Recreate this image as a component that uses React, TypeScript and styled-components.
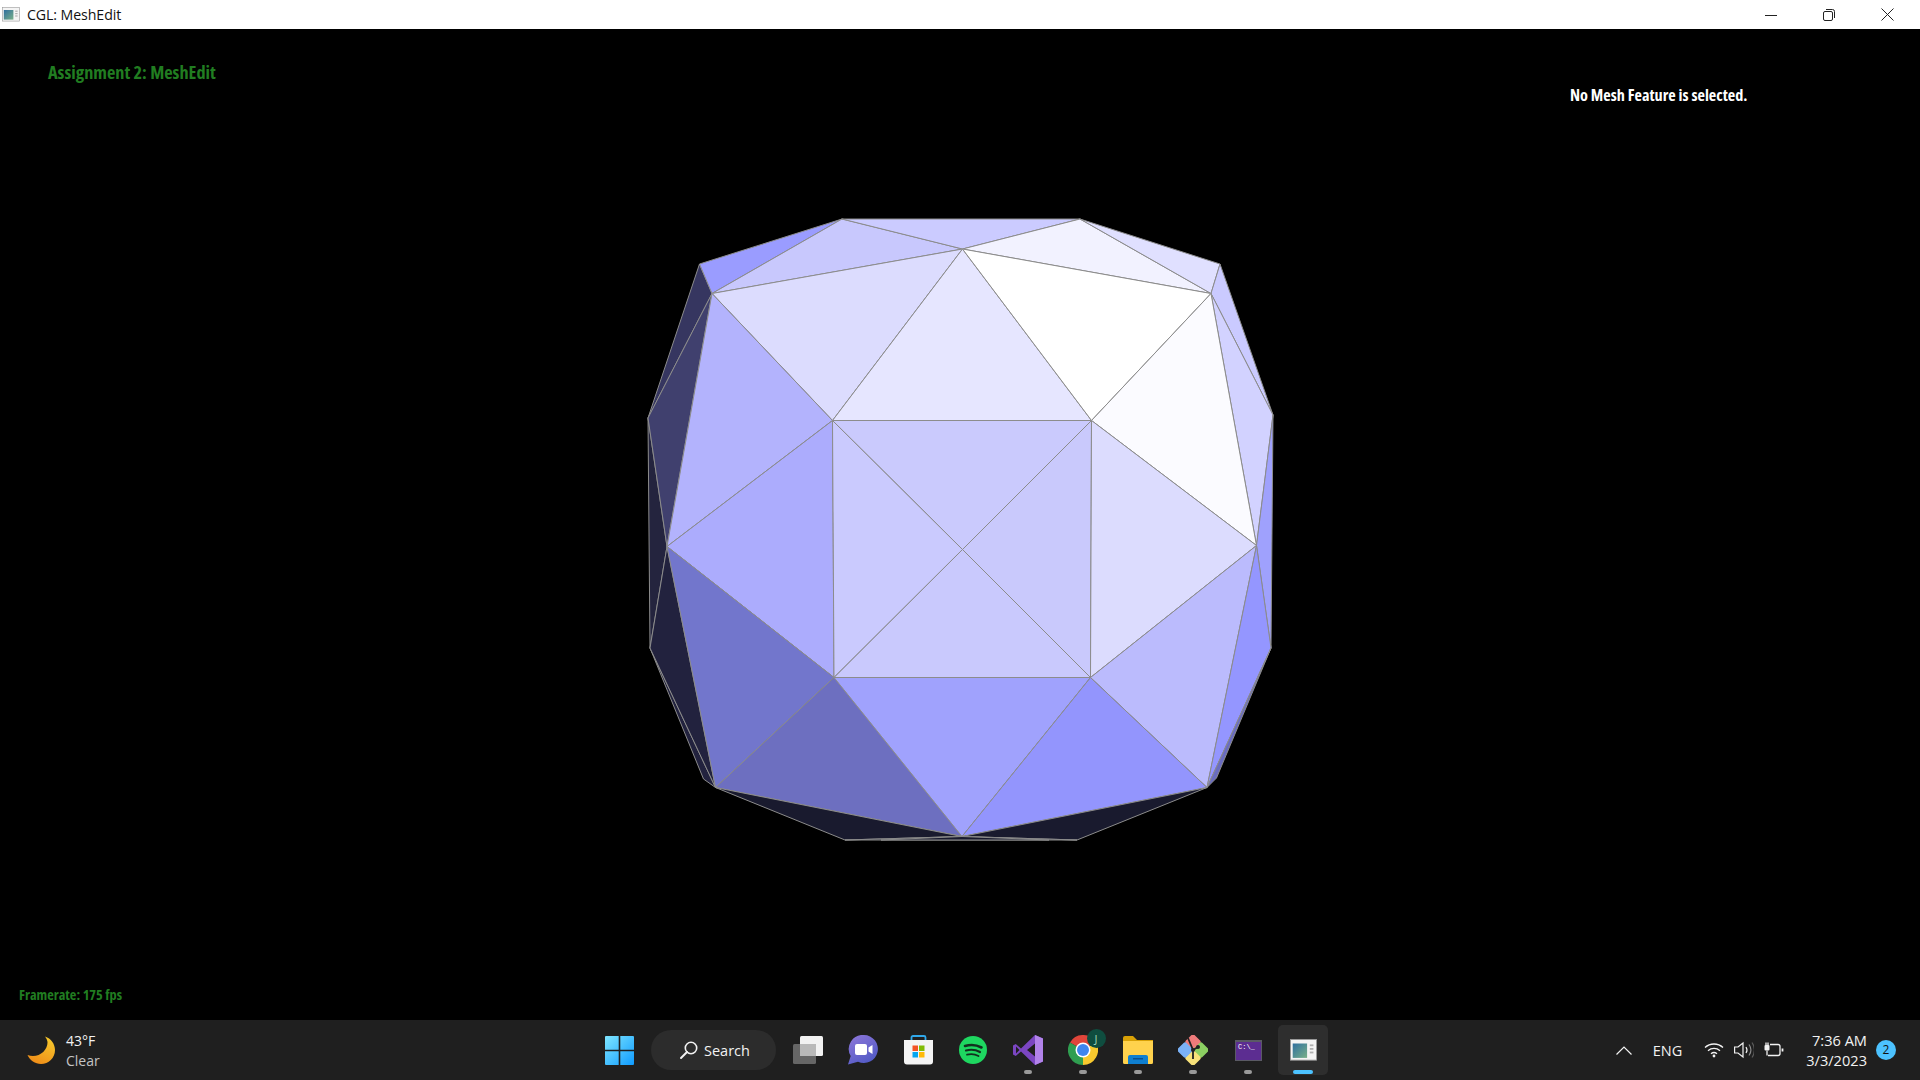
import React, { FC } from "react";
import styled, { createGlobalStyle } from "styled-components";

const Global = createGlobalStyle`
  html, body, #root {
    margin: 0;
    width: 100%;
    height: 100%;
    background: #000;
  }
`;

type P = [number, number];

const V: Record<string, P> = {
  t1: [842, 219],
  t2: [1080, 219],
  c: [962.5, 249],
  uli: [712, 293.5],
  ulo: [699.5, 264],
  uri: [1211, 293.5],
  uro: [1220, 264],
  lo: [648, 418],
  ro: [1273, 415],
  tl: [832.5, 420.5],
  tr: [1091.5, 420.5],
  l: [667, 546.5],
  r: [1256.5, 545.5],
  m: [962.5, 549.5],
  bl: [834, 677.5],
  br: [1090.5, 677.5],
  llo: [650, 648],
  rlo: [1271, 648],
  lli: [715.5, 787.5],
  lri: [1207, 787.5],
  lbo: [703.5, 779],
  rbo: [1216.5, 778],
  bc: [962, 836.5],
  bbl: [845, 840],
  bbr: [1077, 840],
  sl: [881, 840],
  sr: [1049, 840],
};

const FACES: [string, string][] = [
  ["lo l llo", "#24243e"],
  ["llo lbo lli", "#22223e"],
  ["l llo lli", "#22223e"],
  ["uli ulo lo", "#363660"],
  ["uli lo l", "#40406e"],
  ["t1 ulo uli", "#9a9cff"],
  ["t1 c uli", "#c8c8fd"],
  ["t1 t2 c", "#cbcbff"],
  ["t2 c uri", "#f2f2ff"],
  ["t2 uro uri", "#e0e0ff"],
  ["uri uro ro", "#cacaff"],
  ["uri ro r", "#d2d2ff"],
  ["c uli tl", "#dcdcfe"],
  ["c tl tr", "#e6e6ff"],
  ["c tr uri", "#ffffff"],
  ["uri tr r", "#fbfbff"],
  ["uli tl l", "#b3b3fd"],
  ["tl l bl", "#acacfd"],
  ["tl tr m", "#cacafd"],
  ["tl bl m", "#cacafe"],
  ["tr br m", "#c9c9fc"],
  ["bl br m", "#c9c9fd"],
  ["tr br r", "#dcdcfe"],
  ["br lri r", "#bbbbfd"],
  ["ro r rlo", "#9fa1fd"],
  ["r rlo lri", "#9496ff"],
  ["rlo rbo lri", "#6a6cc0"],
  ["l bl lli", "#7276cc"],
  ["bl lli bc", "#6d6fc0"],
  ["bl br bc", "#a0a2fd"],
  ["br lri bc", "#9395fd"],
  ["lli bbl bc", "#191a2e"],
  ["lri bbr bc", "#191a2e"],
  ["bbl bc bbr", "#191a2e"],
  ["sl bc sr", "#191a2e"],
];

const Mesh: FC = () => (
  <MeshSvg viewBox="0 29 1920 991">
    {FACES.map(([names, fill]) => (
      <polygon
        key={names}
        points={names
          .split(" ")
          .map((n) => V[n].join(","))
          .join(" ")}
        fill={fill}
        stroke="#8c8c8c"
        strokeWidth="1"
        strokeLinejoin="round"
      />
    ))}
  </MeshSvg>
);

const AppIcon: FC<{ size: number }> = ({ size }) => (
  <svg width={size} height={size * 0.8} viewBox="0 0 30 24">
    <defs>
      <linearGradient id="appg" x1="0" y1="0" x2="1" y2="1">
        <stop offset="0" stopColor="#2f6f9f" />
        <stop offset="1" stopColor="#78b088" />
      </linearGradient>
    </defs>
    <rect x="0.5" y="0.5" width="29" height="23" fill="#f4f4f4" stroke="#9a9a9a" />
    <rect x="3" y="5" width="16" height="16" fill="url(#appg)" />
    <rect x="22" y="6" width="4" height="2" fill="#b0b0b0" />
    <rect x="22" y="10" width="4" height="2" fill="#b0b0b0" />
    <rect x="22" y="14" width="4" height="2" fill="#b0b0b0" />
  </svg>
);

const MinimizeIcon: FC = () => (
  <svg width="12" height="12" viewBox="0 0 12 12">
    <path d="M0 6.5h12" stroke="#222" strokeWidth="1" />
  </svg>
);

const RestoreIcon: FC = () => (
  <svg width="12" height="12" viewBox="0 0 12 12" fill="none" stroke="#222">
    <rect x="0.5" y="2.5" width="9" height="9" rx="1.5" />
    <path d="M3 .5h6.5a2 2 0 0 1 2 2V9" />
  </svg>
);

const CloseIcon: FC = () => (
  <svg width="13" height="13" viewBox="0 0 13 13" fill="none" stroke="#222">
    <path d="M.5.5l12 12M12.5.5l-12 12" />
  </svg>
);

const MoonIcon: FC = () => (
  <svg width="28" height="28" viewBox="0 0 28 28">
    <defs>
      <linearGradient id="moong" x1="0.7" y1="0" x2="0.2" y2="1">
        <stop offset="0" stopColor="#f6c72c" />
        <stop offset="1" stopColor="#ef8a17" />
      </linearGradient>
    </defs>
    <path
      d="M18 0.5C24 2.5 28 8 28 14c0 8-6.5 14-14 14C8 28 3 24.500 0.500 19c1.800 0.600 3.500 1 5.500 1 8 0 14.500-6.500 14.500-13.500C20.500 4.400 19.500 2.300 18 0.500z"
      fill="url(#moong)"
    />
  </svg>
);

const StartIcon: FC = () => (
  <svg width="29" height="29" viewBox="0 0 29 29">
    <defs>
      <linearGradient id="startg" gradientUnits="userSpaceOnUse" x1="0" y1="0" x2="29" y2="29">
        <stop offset="0" stopColor="#7fe6ff" />
        <stop offset="1" stopColor="#0f9bff" />
      </linearGradient>
    </defs>
    <path
      d="M1 0h12.700v13.700H0V1a1 1 0 0 1 1-1zM15.300 0H28a1 1 0 0 1 1 1v12.700H15.300zM0 15.300h13.700V29H1a1 1 0 0 1-1-1zM15.300 15.300H29V28a1 1 0 0 1-1 1H15.300z"
      fill="url(#startg)"
    />
  </svg>
);

const SearchIcon: FC = () => (
  <svg width="18" height="18" viewBox="0 0 18 18" fill="none" stroke="#f2f2f2" strokeWidth="1.600">
    <circle cx="11" cy="7" r="5.700" />
    <path d="M7 11l-6 6" strokeLinecap="round" strokeWidth="1.900" />
  </svg>
);

const TaskViewIcon: FC = () => (
  <svg width="30" height="28" viewBox="0 0 30 28">
    <rect x="7" y="0" width="23" height="20" rx="1.500" fill="#f2f2f2" />
    <rect x="0" y="8" width="23" height="20" rx="1.500" fill="#6e6e6e" fillOpacity="0.9" />
    <rect x="7" y="8" width="16" height="12" fill="#b9b9b9" />
  </svg>
);

const TeamsIcon: FC = () => (
  <svg width="30" height="30" viewBox="0 0 30 30">
    <defs>
      <linearGradient id="teamsg" x1="0.2" y1="0" x2="0.8" y2="1">
        <stop offset="0" stopColor="#8a75d8" />
        <stop offset="1" stopColor="#4d58c4" />
      </linearGradient>
    </defs>
    <path
      d="M16 0a14 14 0 1 1-6 26.700L0 29.500l2.700-8.500A14 14 0 0 1 16 0z"
      fill="url(#teamsg)"
    />
    <rect x="7" y="9" width="12" height="11" rx="2" fill="#fff" />
    <path d="M20.500 12.500l4-2.500v9l-4-2.500z" fill="#fff" />
  </svg>
);

const StoreIcon: FC = () => (
  <svg width="29" height="30" viewBox="0 0 29 30">
    <path d="M7.500 6V2.500A1.500 1.500 0 0 1 9 1h11a1.500 1.500 0 0 1 1.500 1.500V6" fill="none" stroke="#2fa8ea" strokeWidth="1.800" />
    <path d="M0 5h29v21.500a3 3 0 0 1-3 3H3a3 3 0 0 1-3-3z" fill="#f4f4f4" />
    <rect x="8.500" y="10.500" width="5.500" height="5.500" fill="#f35325" />
    <rect x="15" y="10.500" width="5.500" height="5.500" fill="#81bc06" />
    <rect x="8.500" y="17" width="5.500" height="5.500" fill="#05a6f0" />
    <rect x="15" y="17" width="5.500" height="5.500" fill="#ffba08" />
  </svg>
);

const SpotifyIcon: FC = () => (
  <svg width="28" height="28" viewBox="0 0 28 28">
    <circle cx="14" cy="14" r="14" fill="#1ed760" />
    <g fill="none" stroke="#12301f" strokeLinecap="round">
      <path d="M6 10c5.500-1.600 11.500-1.200 16.500 1.500" strokeWidth="2.600" />
      <path d="M7 14.500c4.800-1.300 9.800-.8 14 1.500" strokeWidth="2.200" />
      <path d="M8 18.700c4-1 8-.6 11.500 1.300" strokeWidth="1.800" />
    </g>
  </svg>
);

const VsIcon: FC = () => (
  <svg width="30" height="30" viewBox="0 0 30 30">
    <path d="M22 0l8 3.500v23L22 30 8 16.500 2.800 21 0 19.500v-9L2.800 9 8 13.500z" fill="#7b46c2" />
    <path d="M22 0l8 3.500v23L22 30z" fill="#b283ea" />
    <path d="M22 8.500l-8 6.500 8 6.500zM3 11.500v7l3.500-3.500z" fill="#1f1f1f" />
  </svg>
);

const ChromeIcon: FC = () => (
  <svg width="30" height="30" viewBox="0 0 30 30">
    <path d="M15 15L2 7.500A15 15 0 0 1 28 7.500z" fill="#e0453a" />
    <path d="M15 15L28 7.500A15 15 0 0 1 15 30z" fill="#f8c92e" />
    <path d="M15 15L15 30A15 15 0 0 1 2 7.500z" fill="#2f9e50" />
    <circle cx="15" cy="15" r="7.500" fill="#fff" />
    <circle cx="15" cy="15" r="6" fill="#3f85ee" />
  </svg>
);

const FolderIcon: FC = () => (
  <svg width="30" height="28" viewBox="0 0 30 28">
    <path d="M0 2a2 2 0 0 1 2-2h8l4 4h16v6H0z" fill="#d9a106" />
    <path d="M0 5h30v21.500a1.500 1.500 0 0 1-1.500 1.500h-27A1.500 1.500 0 0 1 0 26.500z" fill="#ffd24d" />
    <path d="M5 21a2 2 0 0 1 2-2h16a2 2 0 0 1 2 2v7H5z" fill="#0f7fd0" />
    <rect x="10" y="22" width="10" height="1.500" fill="#0a4f8f" />
  </svg>
);

const SourceIcon: FC = () => (
  <svg width="30" height="30" viewBox="0 0 30 30">
    <rect x="9" y="1" width="12" height="12" rx="2" transform="rotate(45 15 7)" fill="#ef7b7b" />
    <rect x="17" y="9" width="12" height="12" rx="2" transform="rotate(45 23 15)" fill="#8ccf62" />
    <rect x="9" y="17" width="12" height="12" rx="2" transform="rotate(45 15 23)" fill="#f8e27a" />
    <rect x="1" y="9" width="12" height="12" rx="2" transform="rotate(45 7 15)" fill="#7bb2f7" />
    <path d="M10 3l5 12v9M15 15l5-3" stroke="#222" strokeWidth="1.800" fill="none" />
    <circle cx="15" cy="15" r="2" fill="#222" />
    <circle cx="20" cy="12" r="2" fill="#222" />
  </svg>
);

const TerminalIcon: FC = () => (
  <svg width="27" height="21" viewBox="0 0 27 21">
    <rect width="27" height="21" fill="#5a5a64" />
    <rect x="1" y="2" width="25" height="18" fill="#5c2d91" />
    <text x="3" y="9" fontSize="7" fill="#fff" fontFamily="Liberation Mono, monospace">
      C:\_
    </text>
  </svg>
);

const WifiIcon: FC = () => (
  <svg width="20" height="16" viewBox="0 0 20 16" fill="none" stroke="#f2f2f2" strokeWidth="1.300">
    <path d="M1 5.500c5-4.700 13-4.700 18 0" />
    <path d="M4 8.700c3.400-3 8.600-3 12 0" />
    <path d="M7 11.700c1.700-1.400 4.300-1.400 6 0" />
    <circle cx="10" cy="14" r="1.400" fill="#f2f2f2" stroke="none" />
  </svg>
);

const VolumeIcon: FC = () => (
  <svg width="20" height="18" viewBox="0 0 20 18" fill="none" stroke="#f2f2f2" strokeWidth="1.200">
    <path d="M.6 6h3.400L9 2v14l-5-4H.6z" />
    <path d="M12 6c1.200 1.800 1.200 4.200 0 6" />
    <path d="M15 3.500c2.400 3.400 2.400 7.600 0 11" stroke="#8a8a8a" />
    <path d="M18 1.500c3 4.600 3 10.400 0 15" stroke="#5a5a5a" />
  </svg>
);

const BatteryIcon: FC = () => (
  <svg width="20" height="16" viewBox="0 0 20 16" fill="none" stroke="#f2f2f2" strokeWidth="1.300">
    <path d="M6 2.500h8a2 2 0 0 1 2 2v7a2 2 0 0 1-2 2H4" />
    <path d="M18.500 6.500v3" strokeWidth="1.800" />
    <rect x="0.500" y="3" width="5" height="5.500" rx="1" fill="#f2f2f2" stroke="none" />
    <path d="M2 0.500V3M4 0.500V3M3 8.500v5" />
  </svg>
);

type Task = { name: string; icon: React.ReactNode; pip?: boolean; active?: boolean; badge?: string };

const LEFT_TASKS: Task[] = [{ name: "Task View", icon: <TaskViewIcon /> }];

const TASKS: Task[] = [
  { name: "Teams", icon: <TeamsIcon /> },
  { name: "Store", icon: <StoreIcon /> },
  { name: "Spotify", icon: <SpotifyIcon /> },
  { name: "Visual Studio", icon: <VsIcon />, pip: true },
  { name: "Chrome", icon: <ChromeIcon />, pip: true, badge: "J" },
  { name: "Explorer", icon: <FolderIcon />, pip: true },
  { name: "Git", icon: <SourceIcon />, pip: true },
  { name: "Terminal", icon: <TerminalIcon />, pip: true },
  { name: "MeshEdit", icon: <AppIcon size={27} />, active: true },
];

const TaskItem: FC<{ task: Task }> = ({ task }) => (
  <TaskButton $active={task.active} aria-label={task.name}>
    {task.icon}
    {task.badge && <ProfileBadge>{task.badge}</ProfileBadge>}
    {task.pip && <Pip />}
    {task.active && <ActiveBar />}
  </TaskButton>
);

export default function App() {
  return (
    <Page>
      <Global />
      <TitleBar>
        <TitleIcon>
          <AppIcon size={18} />
        </TitleIcon>
        <WindowTitle>CGL: MeshEdit</WindowTitle>
        <WindowControls>
          <WindowButton>
            <MinimizeIcon />
          </WindowButton>
          <WindowButton>
            <RestoreIcon />
          </WindowButton>
          <WindowButton>
            <CloseIcon />
          </WindowButton>
        </WindowControls>
      </TitleBar>
      <Viewport>
        <Mesh />
        <AssignmentLabel>Assignment 2: MeshEdit</AssignmentLabel>
        <SelectionLabel>No Mesh Feature is selected.</SelectionLabel>
        <FramerateLabel>Framerate: 175 fps</FramerateLabel>
      </Viewport>
      <Taskbar>
        <Weather>
          <MoonIcon />
          <WeatherText>
            <span>43°F</span>
            <WeatherSub>Clear</WeatherSub>
          </WeatherText>
        </Weather>
        <TaskGroup>
          <TaskButton aria-label="Start">
            <StartIcon />
          </TaskButton>
          <SearchPill>
            <SearchIcon />
            Search
          </SearchPill>
          {LEFT_TASKS.concat(TASKS).map((t) => (
            <TaskItem key={t.name} task={t} />
          ))}
        </TaskGroup>
        <Tray>
          <svg width="16" height="9" viewBox="0 0 16 9" fill="none" stroke="#f2f2f2" strokeWidth="1.200">
            <path d="M.5 8.500L8 1l7.500 7.500" />
          </svg>
          <Lang>ENG</Lang>
          <TrayIcons>
            <WifiIcon />
            <VolumeIcon />
            <BatteryIcon />
          </TrayIcons>
          <Clock>
            <span>7:36 AM</span>
            <span>3/3/2023</span>
          </Clock>
          <NotificationBadge>2</NotificationBadge>
        </Tray>
      </Taskbar>
    </Page>
  );
}

const Page = styled.div`
  display: flex;
  flex-direction: column;
  width: 1920px;
  height: 1080px;
  overflow: hidden;
  font-family: "Open Sans", "Noto Sans", sans-serif;
`;

const TitleBar = styled.header`
  flex: 0 0 29px;
  display: flex;
  align-items: center;
  padding: 0 4px 0 2px;
  background: #fff;
`;

const TitleIcon = styled.span`
  display: flex;
  margin-right: 7px;
`;

const WindowTitle = styled.span`
  flex: 1;
  font-size: 14.2px;
  letter-spacing: -0.1px;
  color: #111;
`;

const WindowControls = styled.div`
  display: flex;
`;

const WindowButton = styled.span`
  display: flex;
  align-items: center;
  justify-content: center;
  width: 58px;
  height: 29px;
`;

const Viewport = styled.main`
  position: relative;
  flex: 1;
  background: #000;
`;

const MeshSvg = styled.svg`
  display: block;
  width: 100%;
  height: 100%;
`;

const HudLabel = styled.div`
  position: absolute;
  font-weight: 700;
  font-stretch: 75%;
  white-space: nowrap;
`;

const AssignmentLabel = styled(HudLabel)`
  left: 48px;
  top: 30px;
  font-size: 18.3px;
  color: #217d21;
`;

const SelectionLabel = styled(HudLabel)`
  left: 1570px;
  top: 55px;
  font-size: 16.2px;
  color: #fff;
`;

const FramerateLabel = styled(HudLabel)`
  left: 19px;
  top: 956px;
  font-size: 14.3px;
  color: #217d21;
`;

const Taskbar = styled.footer`
  flex: 0 0 60px;
  position: relative;
  display: grid;
  grid-template-columns: 591.5px 1fr auto;
  align-items: center;
  background: #1f1f1f;
  color: #f2f2f2;
`;

const Weather = styled.div`
  display: flex;
  align-items: center;
  gap: 11px;
  padding-left: 27px;
`;

const WeatherText = styled.div`
  display: flex;
  flex-direction: column;
  padding-top: 1px;
  font-size: 14px;
  line-height: 20px;
`;

const WeatherSub = styled.span`
  color: #c4c4c4;
`;

const TaskGroup = styled.div`
  display: flex;
  align-items: center;
`;

const TaskButton = styled.div<{ $active?: boolean }>`
  position: relative;
  display: flex;
  align-items: center;
  justify-content: center;
  width: 55px;
  height: 50px;
  &::before {
    content: "";
    position: absolute;
    inset: 0 2.5px;
    border-radius: 5px;
    background: ${({ $active }) => ($active ? "#2e2e2e" : "transparent")};
  }
  & > svg {
    position: relative;
  }
`;

const SearchPill = styled.div`
  display: flex;
  align-items: center;
  gap: 6px;
  width: 125px;
  height: 40px;
  margin: 0 4.5px;
  padding-left: 29px;
  box-sizing: border-box;
  border-radius: 20px;
  background: #2c2c2c;
  font-size: 14.5px;
`;

const ProfileBadge = styled.span`
  position: absolute;
  left: 31px;
  top: 4px;
  width: 19px;
  height: 19px;
  border-radius: 50%;
  background: #0f4d3f;
  color: #9fd4b8;
  font-size: 11px;
  line-height: 19px;
  text-align: center;
`;

const Pip = styled.span`
  position: absolute;
  left: 23.5px;
  bottom: 1px;
  width: 8px;
  height: 4px;
  border-radius: 2px;
  background: #9a9a9a;
`;

const ActiveBar = styled.span`
  position: absolute;
  left: 17.5px;
  bottom: 1px;
  width: 20px;
  height: 4px;
  border-radius: 2px;
  background: #4cc2ff;
`;

const Tray = styled.div`
  display: flex;
  align-items: center;
  padding-right: 24px;
`;

const Lang = styled.span`
  margin-left: 21px;
  font-size: 14.5px;
`;

const TrayIcons = styled.div`
  display: flex;
  align-items: center;
  gap: 10px;
  margin-left: 22px;
`;

const Clock = styled.div`
  display: flex;
  flex-direction: column;
  align-items: flex-end;
  margin-top: -1px;
  margin-left: 22px;
  font-size: 14.6px;
  line-height: 20px;
`;

const NotificationBadge = styled.span`
  width: 20px;
  height: 20px;
  margin-left: 9px;
  border-radius: 50%;
  background: #4cc2ff;
  color: #111;
  font-size: 12px;
  line-height: 20px;
  text-align: center;
`;
